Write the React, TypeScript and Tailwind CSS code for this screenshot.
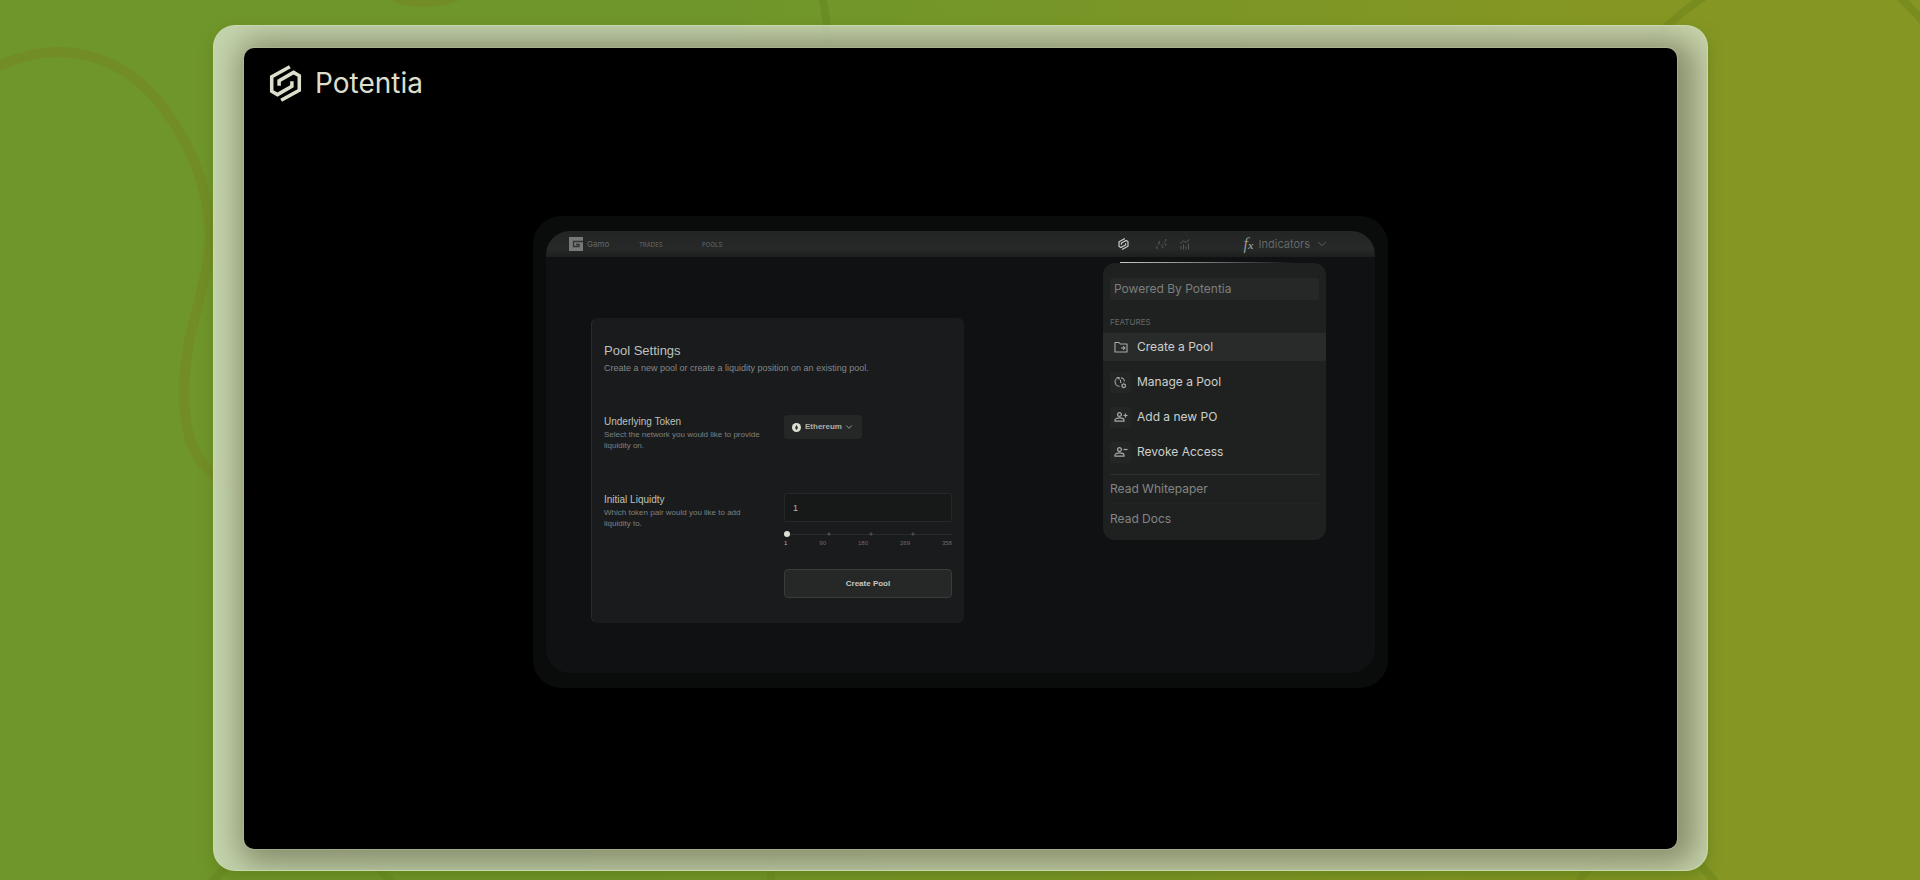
import { ChevronDown } from "lucide-react";
import type { ReactNode } from "react";

function PotentiaMark({ className }: { className: string }) {
  return (
    <svg viewBox="0 0 96 110" fill="none" stroke="currentColor" strokeWidth="10.5" className={className} aria-hidden="true">
      <path d="M61 5 7 35v43l17 10 43-25V48" />
      <path d="M35 105 89 75V32L72 22 29 47v15" />
    </svg>
  );
}

function Backdrop() {
  return (
    <svg
      className="pointer-events-none absolute inset-0 size-full"
      viewBox="0 0 1920 880"
      preserveAspectRatio="none"
      fill="none"
      aria-hidden="true"
    >
      <g strokeWidth="10" stroke="#7a7418" strokeOpacity="0.26">
        <path d="M-10 70C60 34 125 55 165 110S214 220 208 260 182 345 184 400 205 475 245 492" />
        <path d="M385-12C400 4 450 4 470-14" strokeWidth="14" />
      </g>
      <g strokeWidth="8" stroke="#5e7c1a" strokeOpacity="0.32">
        <path d="M820-10C826 10 828 25 826 60" />
        <path d="M1640 55C1662 28 1685 8 1712-8" />
        <path d="M1890-12C1905 2 1920 16 1930 30" />
        <path d="M205 890 230 862M330 845C360 855 385 870 400 892" />
        <path d="M771 892V858M1575 892C1585 862 1600 858 1640 856M1695 858 1722 890" />
      </g>
    </svg>
  );
}

function ScatterIcon() {
  return (
    <svg viewBox="0 0 12 12" className="size-3 text-[#555756]" fill="none" stroke="currentColor" strokeWidth="1" aria-hidden="true">
      <path d="m1.500 9.500 2.500-5 3 4 3.500-6" strokeDasharray="1.500 1.500" />
      <path d="M1 10h1.500M3.500 4H5M7 9h1.500M10 2h1.500M10 6.500h1.500" strokeWidth="1.600" />
    </svg>
  );
}

function BarsIcon() {
  return (
    <svg viewBox="0 0 12 12" className="size-3 text-[#555756]" fill="none" stroke="currentColor" strokeWidth="1" aria-hidden="true">
      <path d="M2 11.500V8M4.500 11.500V6.500M7 11.500V8M9.500 11.500V5.500M1 5.500 4.500 3 7 4.500l3.500-3" />
    </svg>
  );
}

function FolderIcon() {
  return (
    <svg viewBox="0 0 14 14" className="size-[14px]" fill="none" stroke="currentColor" strokeWidth="1.100" aria-hidden="true">
      <path d="M1 2.500h4l1.300 1.500H13v8H1z" strokeLinejoin="round" />
      <path d="M7 8h3.800M9.200 6.300 10.900 8 9.200 9.700" />
    </svg>
  );
}

function ManageIcon() {
  return (
    <svg viewBox="0 0 14 14" className="size-[13px]" fill="none" stroke="currentColor" strokeWidth="1.100" aria-hidden="true">
      <path d="M3 1.500h2.500V4M5.500 1.800A4.500 4.500 0 0 0 6 11M1.300 5.500v.8M2 8.500l.5.700M7.500 1.800A4.500 4.500 0 0 1 11.300 6M7 4v2.500l1 1" />
      <circle cx="10.500" cy="10.500" r="1.800" />
      <path d="M10.500 7.800v1M10.500 12.200v1M8.200 9.200l.8.500M12 11.300l.8.500M12.800 9.200l-.8.500M9 11.300l-.8.500" />
    </svg>
  );
}

function PersonIcon({ plus }: { plus?: boolean }) {
  return (
    <svg viewBox="0 0 14 14" className="size-[14px]" fill="none" stroke="currentColor" strokeWidth="1.200" aria-hidden="true">
      <circle cx="5.500" cy="4.500" r="1.900" />
      <path d="M1 11.200V10c0-1.200 2.200-2.200 4.500-2.200S10 8.800 10 10v1.200z" />
      <path d={plus ? "M9.500 5.500h4M11.500 3.500v4" : "M9.500 4.500h4"} />
    </svg>
  );
}

function TopBar() {
  return (
    <header className="flex h-[26px] items-center bg-linear-to-b from-[#222524] via-[#262928] via-70% to-[#1d1f1f] pr-[46px] pl-[23px] text-[#656766]">
      <a href="#home" className="flex w-[70px] items-center gap-1 text-[8px]">
        <svg viewBox="0 0 14 14" className="size-[14px]" aria-hidden="true">
          <path d="M0 0h14v14H0z" fill="#777978" />
          <path d="M14 4.500H4.500v5h5.500V7.500H7" fill="none" stroke="#303332" strokeWidth="1.300" />
        </svg>
        Gamo
      </a>
      <nav className="flex text-[6px]">
        <a href="#trades" className="w-[63px]">TRADES</a>
        <a href="#pools">POOLS</a>
      </nav>
      <div className="ml-auto flex items-center">
        <button type="button" aria-label="Potentia" className="mr-[26px] text-[#d2d4cf]">
          <PotentiaMark className="h-[12px] w-[11px]" />
        </button>
        <button type="button" aria-label="Scatter" className="mr-3"><ScatterIcon /></button>
        <button type="button" aria-label="Chart" className="mr-[53px]"><BarsIcon /></button>
        <button type="button" className="flex items-center gap-[5px] text-[11px]">
          <span className="font-['Liberation_Serif',serif] text-[16px] leading-3 italic text-[#969895]">
            f<span className="text-[11px] font-bold">x</span>
          </span>
          Indicators
          <ChevronDown className="size-[14px]" strokeWidth={1.5} />
        </button>
      </div>
    </header>
  );
}

function PoolForm() {
  const steps = ["1", "90", "180", "269", "358"];
  return (
    <form className="ml-[45px] h-[305px] w-[373px] shrink-0 rounded-md border border-transparent border-l-[#292b2b] bg-[#191b1c] px-[12px] pt-[24px] font-['Liberation_Sans',sans-serif]">
      <h1 className="text-[13px] leading-4 text-[#bfc1bc]">Pool Settings</h1>
      <p className="mt-[2px] text-[9px] leading-[14px] text-[#858786]">
        Create a new pool or create a liquidity position on an existing pool.
      </p>
      <div className="mt-[40px] grid grid-cols-[160px_1fr] gap-x-[20px]">
        <div className="h-[78px]">
          <label htmlFor="token" className="block text-[10px] leading-[14px] text-[#bfc1bc]">Underlying Token</label>
          <p className="text-[8px] leading-[11px] text-[#7f8180]">
            Select the network you would like to provide liquidity on.
          </p>
        </div>
        <div>
          <div className="relative flex h-6 w-[78px] items-center rounded-sm bg-[#252727] text-[#aeb0ac]">
            <svg viewBox="0 0 10 10" className="absolute left-2 size-[9px]" aria-hidden="true">
              <circle cx="5" cy="5" r="5" fill="#dce0d3" />
              <path d="M5 2 6.600 5.200 5 8 3.400 5.200z" fill="#303231" />
            </svg>
            <select id="token" className="size-full appearance-none bg-transparent pl-[21px] text-[8px] font-bold outline-none">
              <option>Ethereum</option>
            </select>
            <ChevronDown className="pointer-events-none absolute right-2 size-[10px]" />
          </div>
        </div>
        <div>
          <label htmlFor="liquidity" className="block text-[10px] leading-[14px] text-[#bfc1bc]">Initial Liquidty</label>
          <p className="w-[140px] text-[8px] leading-[11px] text-[#7f8180]">
            Which token pair would you like to add liquidity to.
          </p>
        </div>
        <div className="w-[168px]">
          <input
            id="liquidity"
            defaultValue="1"
            className="block h-[29px] w-full rounded-xs border border-[#262828] bg-[#171919] px-2 text-[9px] text-[#b4b6b2] outline-none"
          />
          <input
            type="range"
            aria-label="Liquidity amount"
            min={1}
            max={358}
            defaultValue={1}
            className="mt-[9px] block h-[6px] w-full appearance-none bg-[radial-gradient(circle,#484a49_1px,transparent_2px),linear-gradient(#2a2c2c,#2a2c2c)] bg-[length:42px_6px,100%_1px] bg-[position:-18px_0,center] bg-[repeat:repeat-x,no-repeat] [background-repeat:repeat-x,no-repeat] [&::-webkit-slider-thumb]:size-[6px] [&::-webkit-slider-thumb]:appearance-none [&::-webkit-slider-thumb]:rounded-full [&::-webkit-slider-thumb]:bg-[#dce0d3]"
          />
          <div className="mt-[2px] flex justify-between text-[6px] leading-2 text-[#6c6e6d]">
            {steps.map((step) => (
              <span key={step} className="first:text-[#b4b6b2]">{step}</span>
            ))}
          </div>
          <button
            type="button"
            className="mt-[22px] h-[29px] w-full rounded-sm border border-[#3a3c3a] bg-[#262827] text-[8px] font-bold text-[#c6c8c2]"
          >
            Create Pool
          </button>
        </div>
      </div>
    </form>
  );
}

function MenuItem({ icon, label, active }: { icon: ReactNode; label: string; active?: boolean }) {
  return (
    <button
      type="button"
      className={`flex h-[28px] w-full items-center gap-[6px] px-[7px] text-[12px] text-[#cdcfca] ${active ? "bg-[#292b2b]" : ""}`}
    >
      <span className={`flex size-[21px] items-center justify-center rounded-xs text-[#a8aaa6] ${active ? "" : "bg-[#242626]"}`}>{icon}</span>
      {label}
    </button>
  );
}

function FeatureMenu() {
  return (
    <aside className="mt-[5px] mr-[49px] w-[223px] shrink-0">
      <div className="ml-[17px] h-px bg-linear-to-r from-[#c8cac6] via-[#7f817f] via-40% to-transparent to-85%" />
      <div className="h-[277px] rounded-xl bg-[#1f2121] pt-[15px]">
        <div className="mx-[7px] flex h-[22px] items-center rounded-xs bg-[#262828] px-1 text-[12px] text-[#7c7e7d]">
          Powered By Potentia
        </div>
        <h2 className="mt-[17px] px-[7px] text-[8px] leading-[11px] text-[#666867]">FEATURES</h2>
        <div className="mt-[5px] flex flex-col gap-[7px]">
          <MenuItem active icon={<FolderIcon />} label="Create a Pool" />
          <MenuItem icon={<ManageIcon />} label="Manage a Pool" />
          <MenuItem icon={<PersonIcon plus />} label="Add a new PO" />
          <MenuItem icon={<PersonIcon />} label="Revoke Access" />
        </div>
        <div className="mx-[7px] mt-[8px] flex flex-col border-t border-[#2d2f2f] text-[12px] text-[#838583]">
          <a href="#whitepaper" className="flex h-[29px] items-center border-b border-[#232525]">Read Whitepaper</a>
          <a href="#docs" className="flex h-[29px] items-center">Read Docs</a>
        </div>
      </div>
    </aside>
  );
}

export default function App() {
  return (
    <div className="relative min-h-screen overflow-hidden bg-[linear-gradient(100deg,#6f962a_35%,#869623_78%)] pt-[25px] pr-[212px] pb-[9px] pl-[213px] font-['Inter',sans-serif]">
      <Backdrop />
      <main className="relative overflow-hidden rounded-[22px] border border-[#c8dbb0]/60 bg-[#d4dfc4]/85 px-[30px] pt-[22px] pb-[21px] shadow-[0_6px_14px_#63801ccc]">
        <section className="h-[801px] rounded-[10px] bg-black shadow-[0_0_0_1px_rgba(190,198,165,0.4),7px_4px_30px_12px_rgba(85,85,55,0.55)]">
          <div className="flex h-[168px] items-start gap-[13px] pt-[17px] pl-[25px] text-[#dcdfcc]">
            <PotentiaMark className="h-[37px] w-[33px]" />
            <span className="text-[28px] leading-[37px]">Potentia</span>
          </div>
          <div className="mx-auto w-[855px] rounded-[28px] bg-[#0a0b0b] px-[13px] pt-[15px] pb-[15px]">
            <div className="overflow-hidden rounded-[24px] bg-[#0f1112]">
              <TopBar />
              <div className="flex h-[416px] justify-between">
                <div className="pt-[61px]"><PoolForm /></div>
                <FeatureMenu />
              </div>
            </div>
          </div>
        </section>
      </main>
    </div>
  );
}
